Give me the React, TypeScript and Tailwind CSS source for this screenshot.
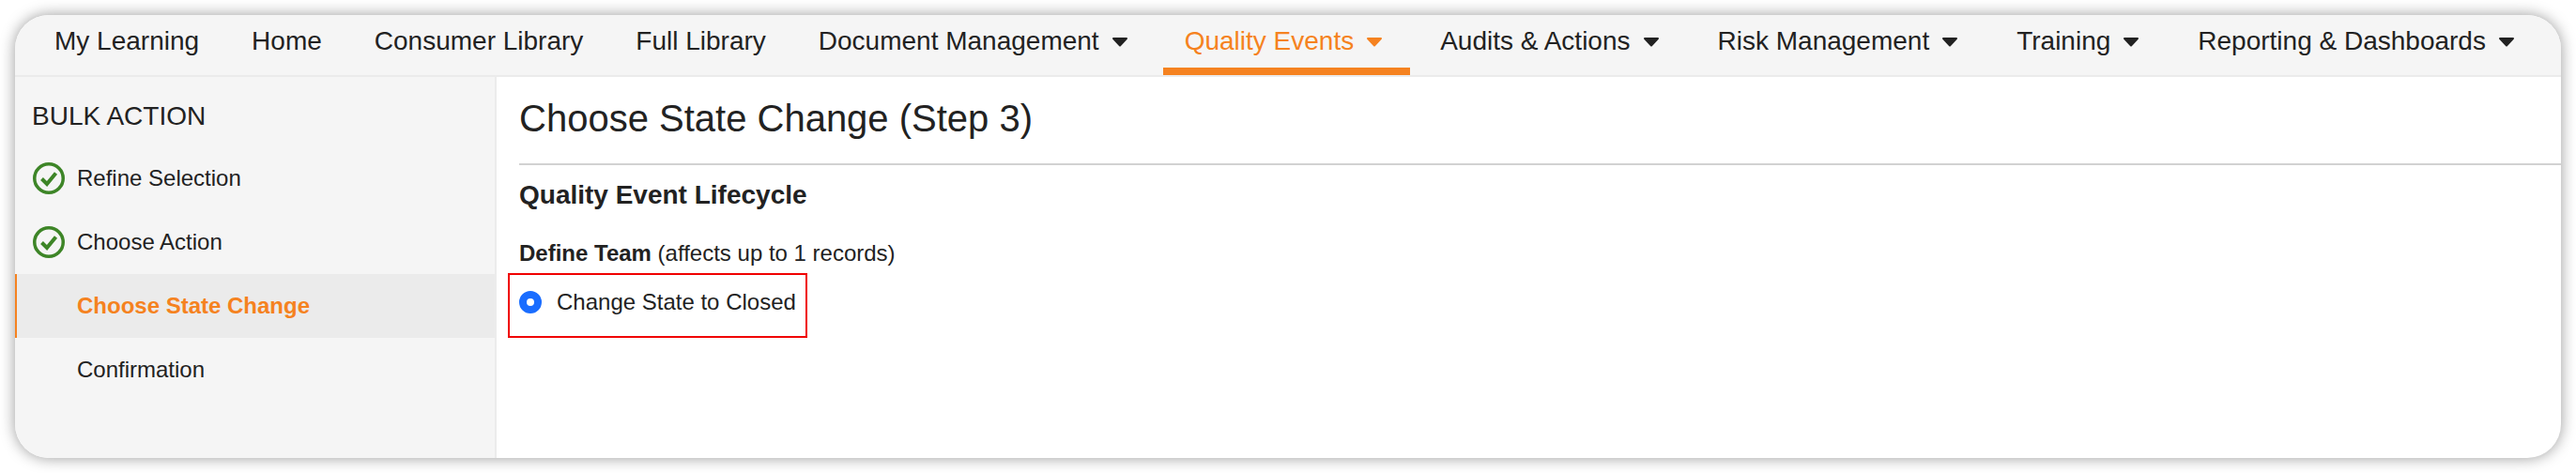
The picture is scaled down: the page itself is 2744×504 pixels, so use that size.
import React from 'react';

type NavItem = { label: string; menu?: boolean; active?: boolean };

const navItems: NavItem[] = [
  { label: 'My Learning' },
  { label: 'Home' },
  { label: 'Consumer Library' },
  { label: 'Full Library' },
  { label: 'Document Management', menu: true },
  { label: 'Quality Events', menu: true, active: true },
  { label: 'Audits & Actions', menu: true },
  { label: 'Risk Management', menu: true },
  { label: 'Training', menu: true },
  { label: 'Reporting & Dashboards', menu: true },
];

const Caret = () => (
  <svg viewBox="0 0 18 11" className="w-[18px] h-[11px] ml-[13px] fill-current stroke-current" strokeWidth="2" strokeLinejoin="round">
    <path d="M2 2 H16 L9 9.5 Z" />
  </svg>
);

const DoneIcon = () => (
  <svg viewBox="0 0 34 34" className="w-[34px] h-[34px] shrink-0 fill-none stroke-[#3d8527]">
    <circle cx="17" cy="17" r="15.25" strokeWidth="3.5" />
    <path d="M9.5 17.5 L15 23 L24.5 11.5" strokeWidth="4" />
  </svg>
);

const App: React.FC = () => {
  return (
    <div className="w-[2744px] h-[504px] bg-white p-4 font-['Liberation_Sans',Arial,sans-serif] text-[#222]">
      <div className="w-full h-full rounded-[36px] overflow-hidden bg-white flex flex-col shadow-[0_0_16px_rgba(0,0,0,0.4)]">
        <nav className="h-[66px] shrink-0 flex bg-[#f5f5f5] border-b-2 border-[#ebebeb] pl-[14px] text-[28px]">
          {navItems.map((item) => (
            <div
              key={item.label}
              className={`h-[64px] flex items-center border-b-[8px] ${
                item.active
                  ? 'ml-[3px] mr-[4px] pl-[23px] pr-[29px] border-[#f58220] text-[#f58220]'
                  : item.menu
                    ? 'pl-[28px] pr-[34px] border-transparent'
                    : 'px-[28px] border-transparent'
              }`}
            >
              {item.label}
              {item.menu && <Caret />}
            </div>
          ))}
        </nav>
        <div className="flex-1 flex min-h-0">
          <aside className="w-[513px] shrink-0 bg-[#f5f5f5] border-r-2 border-[#ececec]">
            <h2 className="pl-[18px] pt-[24px] text-[28px] leading-[36px]">BULK ACTION</h2>
            <div className="mt-[14px] text-[24px]">
              <div className="h-[68px] flex items-center pl-[19px] gap-[13px]">
                <DoneIcon />
                Refine Selection
              </div>
              <div className="h-[68px] flex items-center pl-[19px] gap-[13px]">
                <DoneIcon />
                Choose Action
              </div>
              <div className="h-[68px] flex items-center pl-[64px] bg-[#ebebeb] border-l-2 border-[#f58220] font-bold text-[#f58220]">
                Choose State Change
              </div>
              <div className="h-[68px] flex items-center pl-[66px]">Confirmation</div>
            </div>
          </aside>
          <main className="flex-1 pl-[24px]">
            <h1 className="h-[94px] flex items-center pb-[4px] text-[40px] border-b-2 border-[#d2d2d2]">Choose State Change (Step 3)</h1>
            <h3 className="mt-[14px] text-[28px] leading-[36px] font-bold">Quality Event Lifecycle</h3>
            <p className="mt-[30px] text-[24px] leading-[28px]">
              <b>Define Team</b> (affects up to 1 records)
            </p>
            <div className="mt-[7px] -ml-[12px] w-[319px] h-[69px] flex items-start gap-[16px] pt-[17px] pl-[10px] text-[24px] leading-[24px] border-2 border-[#f00000]">
              <span className="w-[24px] h-[24px] rounded-full border-[8px] border-[#1a6dff] bg-white" />
              Change State to Closed
            </div>
          </main>
        </div>
      </div>
    </div>
  );
};

export default App;
